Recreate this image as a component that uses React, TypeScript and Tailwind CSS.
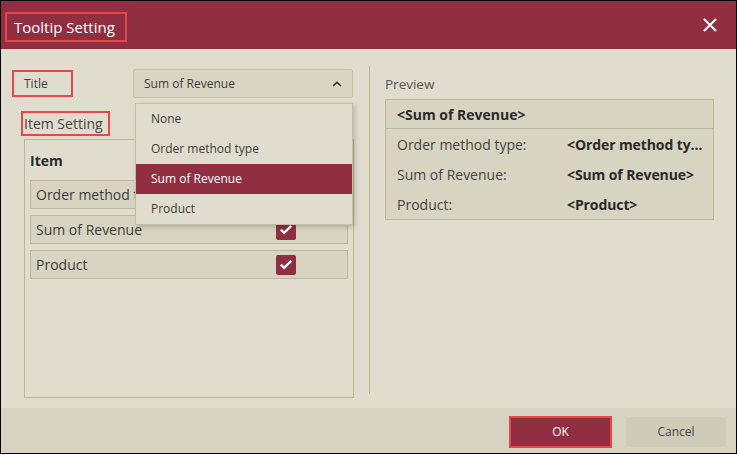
import React from "react";

const Check = () => (
  <div className="w-[20px] h-[20px] rounded-[2px] bg-[#922e41] flex items-center justify-center">
    <svg width="14" height="11" viewBox="0 0 14 11">
      <polyline points="1.8,5.6 5.2,8.8 12.2,1.8" fill="none" stroke="#ffffff" strokeWidth="2.4" />
    </svg>
  </div>
);

export default function App() {
  const rows = ["Order method type", "Sum of Revenue", "Product"];
  const preview = [
    ["Order method type:", "<Order method type>"],
    ["Sum of Revenue:", "<Sum of Revenue>"],
    ["Product:", "<Product>"],
  ];
  return (
    <div
      className="w-[737px] h-[454px] border border-black bg-[#e0ddcf] flex flex-col text-[#3c3c3c]"
      style={{ fontFamily: "'Open Sans', 'Noto Sans', sans-serif" }}
    >
      {/* Header */}
      <div className="h-[48px] shrink-0 bg-[#922e41] flex items-start justify-between pl-[4px] pt-[11px] pr-[18px]">
        <div className="h-[30px] border-2 border-[#e8474a] flex items-center pl-[7px] pr-[10px] text-white text-[15px] font-medium">
          Tooltip Setting
        </div>
        <svg width="16" height="16" viewBox="0 0 16 16" className="mt-[5px]">
          <path d="M2 2 L14 14 M14 2 L2 14" stroke="#ffffff" strokeWidth="2" />
        </svg>
      </div>

      {/* Main */}
      <div className="flex-1 flex">
        {/* Left */}
        <div className="w-[368px] shrink-0 pl-[11px] pt-[20px]">
          <div className="flex items-center h-[29px]">
            <div className="w-[61px] h-[27px] border-2 border-[#e8474a] flex items-center pl-[10px] text-[12px]">
              Title
            </div>
            <div className="relative ml-[60px]">
              <div className="w-[220px] h-[29px] border border-[#c3bfa5] bg-[#d8d5c4] rounded-[2px] flex items-center justify-between pl-[10px] pr-[10px] text-[12px]">
                <span>Sum of Revenue</span>
                <svg width="10" height="6" viewBox="0 0 10 6">
                  <polyline points="1,5 5,1.3 9,5" fill="none" stroke="#333" strokeWidth="1.6" />
                </svg>
              </div>
              <div className="absolute top-[34px] left-[2px] w-[218px] z-10 border border-[#c3bfa5] bg-[#e0ddcf] shadow-[2px_2px_5px_rgba(0,0,0,0.18)] text-[12px]">
                <div className="h-[30px] flex items-center pl-[15px]">None</div>
                <div className="h-[30px] flex items-center pl-[15px]">Order method type</div>
                <div className="h-[30px] flex items-center pl-[15px] bg-[#922e41] text-white">Sum of Revenue</div>
                <div className="h-[30px] flex items-center pl-[15px]">Product</div>
              </div>
            </div>
          </div>

          <div className="mt-[13px] ml-[9px] w-[89px] h-[25px] border-2 border-[#e8474a] flex items-center pl-[1px] text-[14px] text-[#444]">
            Item Setting
          </div>

          <div className="mt-[3px] ml-[12px] w-[330px] h-[259px] border border-[#bab699] px-[5px]">
            <div className="text-[14px] font-bold text-[#2a2a2a] pt-[10px] h-[40px]">Item</div>
            <div className="flex flex-col gap-[6px]">
              {rows.map((r) => (
                <div
                  key={r}
                  className="h-[29px] border border-[#bcb89c] bg-[#d7d4c2] flex items-center justify-between pl-[5px] pr-[51px] text-[14px]"
                >
                  <span>{r}</span>
                  <Check />
                </div>
              ))}
            </div>
          </div>
        </div>

        {/* Divider */}
        <div className="w-px bg-[#bab699] mt-[17px] mb-[14px]" />

        {/* Right */}
        <div className="flex-1 pl-[15px] pt-[25px]">
          <div className="text-[13.5px] text-[#555] h-[25px] leading-[20px]">Preview</div>
          <div className="w-[329px] border border-[#bcb89c] bg-[#d7d4c2] text-[14px]">
            <div className="h-[29px] border-b border-[#bcb89c] flex items-center pl-[11px] font-bold text-[#2a2a2a]">
              &lt;Sum of Revenue&gt;
            </div>
            {preview.map(([l, v]) => (
              <div key={l} className="h-[30px] flex items-center pl-[11px] pr-[3px]">
                <span className="w-[170px] shrink-0 text-[#444]">{l}</span>
                <span className="font-bold text-[#2a2a2a] truncate tracking-[-0.1px]">{v}</span>
              </div>
            ))}
          </div>
        </div>
      </div>

      {/* Footer */}
      <div className="h-[45px] shrink-0 bg-[#d6d3c1] flex items-start justify-end pt-[8px] pr-[10px] gap-[14px]">
        <div className="w-[103px] h-[32px] border-2 border-[#e8474a] bg-[#922e41] text-white text-[12px] flex items-center justify-center">
          OK
        </div>
        <div className="mt-[1px] w-[100px] h-[30px] bg-[#cfcbb9] text-[12px] text-[#444] flex items-center justify-center rounded-[2px]">
          Cancel
        </div>
      </div>
    </div>
  );
}
